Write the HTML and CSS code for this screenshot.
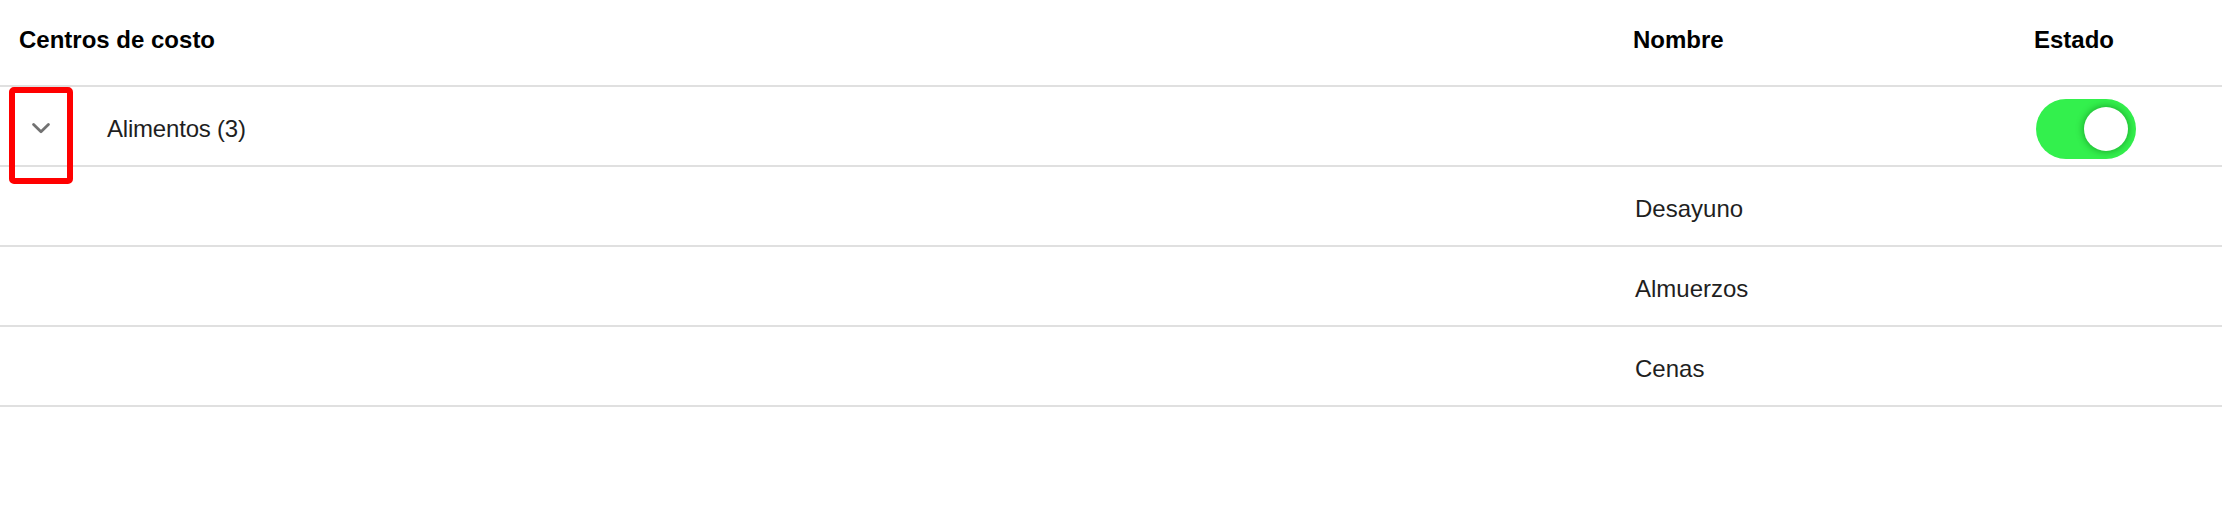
FILE: index.html
```html
<!DOCTYPE html>
<html lang="es">
<head>
<meta charset="utf-8">
<title>Centros de costo</title>
<link rel="stylesheet" href="styles.css">
</head>
<body>
<div class="table">
  <div class="row head">
    <div class="cell c1"><span class="th th-first">Centros de costo</span></div>
    <div class="cell c2"><span class="th">Nombre</span></div>
    <div class="cell c3"><span class="th">Estado</span></div>
  </div>
  <div class="row body group">
    <div class="cell c1">
      <button class="expand" type="button" aria-label="Contraer">
        <svg width="18" height="11" viewBox="0 0 18 11"><path d="M1.6 1.6 L9 8.8 L16.4 1.6" fill="none" stroke="#727272" stroke-width="2.8" stroke-linecap="round" stroke-linejoin="round"/></svg>
      </button>
      <span class="td group-name">Alimentos (3)</span>
      <span class="highlight"></span>
    </div>
    <div class="cell c2"></div>
    <div class="cell c3">
      <span class="switch"><span class="knob"></span></span>
    </div>
  </div>
  <div class="row body">
    <div class="cell c1"></div>
    <div class="cell c2"><span class="td sub">Desayuno</span></div>
    <div class="cell c3"></div>
  </div>
  <div class="row body">
    <div class="cell c1"></div>
    <div class="cell c2"><span class="td sub">Almuerzos</span></div>
    <div class="cell c3"></div>
  </div>
  <div class="row body">
    <div class="cell c1"></div>
    <div class="cell c2"><span class="td sub">Cenas</span></div>
    <div class="cell c3"></div>
  </div>
</div>
</body>
</html>
```
FILE: styles.css
```css
html, body {
  margin: 0;
  padding: 0;
  background: #ffffff;
}
body {
  width: 2222px;
  height: 524px;
  overflow: hidden;
  font-family: "Liberation Sans", Arial, Helvetica, sans-serif;
  font-size: 24px;
  color: #1f1f1f;
}
.table {
  display: flex;
  flex-direction: column;
}
.row {
  display: grid;
  grid-template-columns: 1615px 401px 1fr;
  border-bottom: 2px solid #e0e0e0;
}
.head {
  box-sizing: border-box;
  height: 87px;
  padding-bottom: 5px;
}
.body {
  height: 80px;
  box-sizing: border-box;
  padding-top: 5px;
}
.cell {
  display: flex;
  align-items: center;
  position: relative;
}
.head .c1 { padding-left: 19px; }
.head .c2 { padding-left: 18px; }
.head .c3 { padding-left: 18px; }
.body .c2 { padding-left: 20px; }
.body .c3 { padding-left: 20px; }
.th {
  font-weight: bold;
  color: #000;
}
.expand {
  width: 81px;
  height: 40px;
  padding: 0;
  margin: 0;
  border: 0;
  background: transparent;
  display: flex;
  align-items: center;
  justify-content: center;
}
.expand svg { display: block; }
.group-name {
  margin-left: 26px;
  letter-spacing: -0.2px;
}
.highlight {
  position: absolute;
  left: 9px;
  top: -5px;
  width: 64px;
  height: 97px;
  box-sizing: border-box;
  border: 6px solid #ff0000;
  border-radius: 5px;
  pointer-events: none;
}
.switch {
  width: 100px;
  height: 60px;
  border-radius: 30px;
  background: #33f04d;
  position: relative;
  display: block;
}
.knob {
  position: absolute;
  right: 8px;
  top: 8px;
  width: 44px;
  height: 44px;
  border-radius: 50%;
  background: #ffffff;
  box-shadow: 0 0 7px 1px rgba(0, 90, 10, 0.45);
}
```
